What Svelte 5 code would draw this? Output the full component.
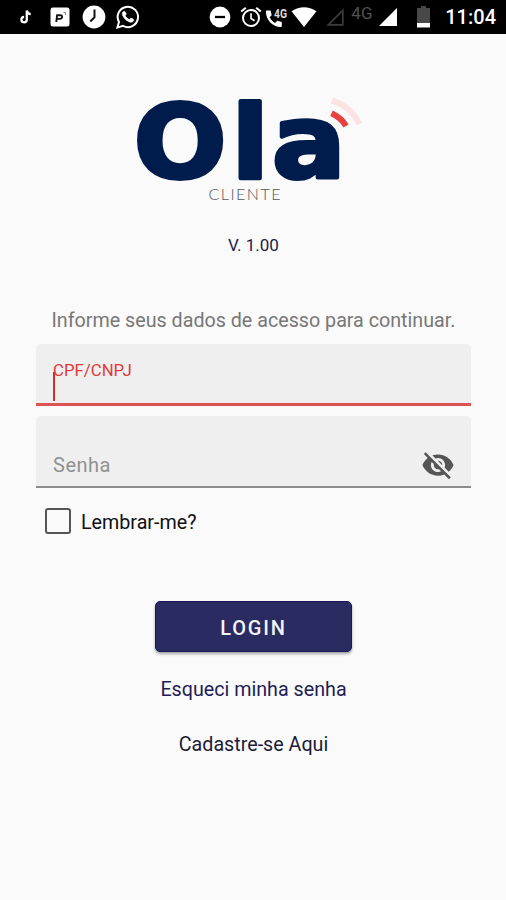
<script>
    let document = '';
    let password = '';
    let remember = false;
    let showPassword = false;

    function togglePassword() {
        showPassword = !showPassword;
    }
</script>

<div class="screen">
    <header class="statusbar">
        <div class="notifications">
            <svg class="tiktok" width="14" height="16" viewBox="0 0 14 16">
                <path d="M7.8 1.5v9.2a2.7 2.7 0 1 1-2.7-2.8M7.8 1.5c.3 2.2 1.7 3.5 4 3.7" fill="none" stroke="#fff" stroke-width="2.3"/>
            </svg>
            <svg class="park" width="20" height="20" viewBox="0 0 20 20">
                <rect x="0.5" y="0.5" width="19" height="19" rx="2.5" fill="#fff"/>
                <path d="M6.300 15l.8-6.800h3.200q2 0 1.800 1.800t-2.400 1.900H7" fill="none" stroke="#111" stroke-width="1.900"/>
                <path d="M13.500 5.500h2v2.500" fill="none" stroke="#888" stroke-width="1"/>
            </svg>
            <svg class="clock" width="24" height="24" viewBox="0 0 24 24">
                <circle cx="12" cy="12" r="11.4" fill="#fff"/>
                <path d="M12.5 4.5v7.8L8.3 16.5" fill="none" stroke="#111" stroke-width="2"/>
            </svg>
            <svg class="whatsapp" width="24" height="24" viewBox="0 0 24 24">
                <path d="M1.4 22.6 3 17A10.2 10.2 0 1 1 7 20.9z" fill="none" stroke="#fff" stroke-width="2"/>
                <path d="M8.5 6.2c-.5-.3-2.200.4-2.300 2.300-.1 3.500 5.200 8.700 8.700 8.800 2 0 3-1.500 2.900-2.600-.1-.5-2.400-1.700-2.900-1.600-.6.1-1.100 1.500-1.500 1.400-1.500-.4-3.600-2.400-4.100-3.900 0-.4 1-1 1-1.500 0-.6-1.200-2.700-1.800-2.900z" fill="#fff" stroke="#fff" stroke-width=".5"/>
            </svg>
        </div>
        <div class="system">
            <svg class="dnd" width="22" height="22" viewBox="0 0 22 22">
                <circle cx="11" cy="11" r="10.4" fill="#fff"/>
                <path d="M6 11h10" stroke="#000" stroke-width="2.3"/>
            </svg>
            <svg class="alarm" width="22" height="22" viewBox="0 0 22 22">
                <circle cx="11" cy="12" r="8" fill="none" stroke="#fff" stroke-width="2"/>
                <path d="M11 7.300V12.500l3.600 2.200" fill="none" stroke="#fff" stroke-width="1.600"/>
                <path d="m1.200 5.600 4.600-3.900M20.800 5.600l-4.600-3.900" stroke="#fff" stroke-width="2"/>
            </svg>
            <svg class="call" width="23" height="24" viewBox="0 0 23 24">
                <path d="M2 5.500h3.600l1.100 4.700-2.100 2c1.300 2.500 3 4.300 5.500 5.700l2.100-2.100 4.600 1.200v4c0 .7-.4 1.100-1.100 1.100C7.500 22.100.9 15 .9 6.600c0-.7.4-1.100 1.100-1.100z" fill="#fff"/>
                <text x="9" y="13" font-size="13.500" font-weight="700" fill="#ddd" textLength="13" lengthAdjust="spacingAndGlyphs">4G</text>
            </svg>
            <svg class="wifi" width="26" height="20" viewBox="0 0 26 20">
                <path d="M.5 4.300Q13-4 25.500 4.300L13 20z" fill="#fff"/>
            </svg>
            <svg class="nosignal" width="18" height="18" viewBox="0 0 18 18">
                <path d="M2.300 16.800H16.800V2.300z" fill="none" stroke="#3c3c3c" stroke-width="1.700"/>
            </svg>
            <span class="network">4G</span>
            <svg class="signal" width="18" height="18" viewBox="0 0 18 18">
                <path d="M0 18H18V0z" fill="#fff"/>
            </svg>
            <svg class="battery" width="13" height="22" viewBox="0 0 13 22">
                <path d="M4 0h5v2h4v15H0V2h4z" fill="#484848"/>
                <path d="M0 17h13v4.500H0z" fill="#fff"/>
            </svg>
            <time>11:04</time>
        </div>
    </header>

    <main>
        <svg class="logo" width="234" height="112" viewBox="130 92 234 112">
            <text class="brand" transform="scale(1.08 1)" x="123.800 214.300 251.900" y="178.500">Ola</text>
            <text class="client" x="208.500" y="200" textLength="72">CLIENTE</text>
            <path d="M331.500 113.300q10 4.700 14.500 12.700" fill="none" stroke="#e6403f" stroke-width="6"/>
            <path d="M332 100.500q18.500 5.500 27.500 23.500" fill="none" stroke="#fbe3e3" stroke-width="6"/>
        </svg>
        <p class="version">V. 1.00</p>

        <form on:submit|preventDefault>
            <p class="hint">Informe seus dados de acesso para continuar.</p>
            <label class="field active">
                <span class="label">CPF/CNPJ</span>
                <input type="text" bind:value={document}/>
                <i class="caret"></i>
            </label>
            <div class="field">
                <input type={showPassword ? 'text' : 'password'} placeholder="Senha" bind:value={password}/>
                <button type="button" class="eye" aria-label="Mostrar senha" on:click={togglePassword}>
                    <svg width="34" height="34" viewBox="0 0 24 24">
                        <path fill="#555" d="M12 7c2.760 0 5 2.240 5 5 0 .65-.13 1.260-.36 1.830l2.920 2.920c1.510-1.260 2.700-2.890 3.430-4.750-1.730-4.390-6-7.500-11-7.500-1.400 0-2.740.25-3.980.7l2.160 2.160C10.740 7.130 11.350 7 12 7zM2 4.270l2.280 2.280.46.46C3.080 8.300 1.780 10.020 1 12c1.730 4.390 6 7.500 11 7.500 1.550 0 3.030-.3 4.380-.84l.42.42L19.730 22 21 20.730 3.270 3 2 4.270zM7.530 9.800l1.550 1.550c-.05.21-.08.43-.08.65 0 1.660 1.340 3 3 3 .22 0 .44-.03.65-.08l1.550 1.550c-.67.33-1.410.53-2.200.53-2.760 0-5-2.240-5-5 0-.79.2-1.530.53-2.200zm4.310-.78 3.150 3.150.02-.16c0-1.660-1.340-3-3-3l-.17.01z"/>
                    </svg>
                </button>
            </div>
            <label class="remember">
                <input type="checkbox" bind:checked={remember}/>
                <span>Lembrar-me?</span>
            </label>
            <button class="login">LOGIN</button>
        </form>

        <a class="forgot" href="#senha">Esqueci minha senha</a>
        <a class="register" href="#cadastro">Cadastre-se Aqui</a>
    </main>
</div>

<style>
    :global(body) {
        margin: 0;
        background: #fafafa;
    }
    .screen {
        height: 900px;
        overflow: hidden;
        background: #fafafa;
        font-family: Roboto, "Liberation Sans", sans-serif;
    }
    .statusbar {
        display: flex;
        justify-content: space-between;
        box-sizing: border-box;
        height: 34px;
        padding: 0 10px 0 19px;
        background: #000;
        color: #fff;
    }
    .notifications, .system {
        display: flex;
        align-items: center;
    }
    .notifications svg, .system svg {
        flex: none;
        overflow: visible;
    }
    .tiktok {
        margin-right: 17px;
    }
    .park {
        margin-right: 12px;
    }
    .clock {
        margin-right: 10px;
    }
    .dnd {
        margin-right: 9px;
    }
    .alarm {
        margin-right: 3px;
    }
    .call {
        margin-right: 3px;
    }
    .wifi {
        margin-right: 9px;
    }
    .nosignal {
        margin-right: 7px;
    }
    .network {
        width: 22px;
        margin: 0 6px 8px 0;
        color: #505050;
        font-size: 17px;
        letter-spacing: 0.3px;
    }
    .signal {
        margin-right: 20px;
    }
    .battery {
        margin-right: 15px;
    }
    time {
        font-size: 20px;
        font-weight: 500;
        line-height: 36px;
    }
    main {
        display: flex;
        flex-direction: column;
        align-items: center;
        padding: 58px 35px 0 36px;
    }
    .logo {
        display: block;
        margin-right: 13px;
        overflow: visible;
    }
    .brand {
        fill: #001c4d;
        stroke: #001c4d;
        stroke-width: 4px;
        stroke-linejoin: round;
        font-family: "DejaVu Sans", sans-serif;
        font-size: 101px;
        font-weight: 700;
    }
    .client {
        fill: #555;
        font-family: Lato, sans-serif;
        font-size: 16px;
        font-weight: 300;
    }
    p {
        margin: 0;
    }
    .version {
        margin-top: 31px;
        color: #1c1c4c;
        font-size: 17px;
        line-height: 20px;
    }
    form {
        display: flex;
        flex-direction: column;
        width: 100%;
        margin-top: 54px;
    }
    .hint {
        color: #777;
        font-size: 19.7px;
        line-height: 24px;
        text-align: center;
        white-space: nowrap;
    }
    .field {
        position: relative;
        display: flex;
        box-sizing: border-box;
        height: 72px;
        margin-top: 10px;
        padding: 27px 16px 0 17px;
        border-bottom: 2px solid #8c8c8c;
        border-radius: 5px 5px 0 0;
        background: #efefef;
    }
    .active {
        flex-direction: column;
        height: 62px;
        margin-top: 11px;
        padding-top: 16px;
        border-bottom: 3px solid #dc5353;
    }
    .label {
        color: #df3a3a;
        font-size: 16.8px;
        line-height: 20px;
    }
    .field input {
        flex: 1;
        min-width: 0;
        min-height: 0;
        padding: 0;
        border: 0;
        outline: 0;
        background: none;
        font: 20px Roboto, sans-serif;
        letter-spacing: 0.5px;
    }
    .field input::placeholder {
        color: #919191;
    }
    .caret {
        position: absolute;
        left: 17px;
        top: 28px;
        width: 2px;
        height: 29px;
        background: #d92b2b;
    }
    .eye {
        height: 34px;
        margin-top: 5px;
        padding: 0;
        border: 0;
        background: none;
    }
    .eye svg {
        display: block;
    }
    .remember {
        display: flex;
        align-items: center;
        height: 26px;
        margin: 20px 0 0 9px;
        color: #111;
        font-size: 19.7px;
        line-height: 24px;
    }
    .remember span {
        padding-top: 4px;
    }
    .remember input {
        box-sizing: border-box;
        width: 26px;
        height: 26px;
        margin: 0 10px 0 0;
        border: 2px solid #555;
        border-radius: 3px;
        appearance: none;
    }
    .login {
        align-self: center;
        width: 197px;
        height: 51px;
        margin: 67px 0 0;
        padding: 2px 0 0;
        border: 1px solid #18185a;
        border-radius: 5px;
        background: #2a2b60;
        box-shadow: 0 2px 3px rgba(0, 0, 0, 0.35);
        color: #f4f4fa;
        font: 500 20px Roboto, sans-serif;
        letter-spacing: 1.8px;
    }
    a {
        font-size: 19.7px;
        line-height: 24px;
        text-decoration: none;
    }
    .forgot {
        margin-top: 26px;
        color: #1f1d55;
    }
    .register {
        margin-top: 31px;
        color: #1c1c38;
    }
</style>
